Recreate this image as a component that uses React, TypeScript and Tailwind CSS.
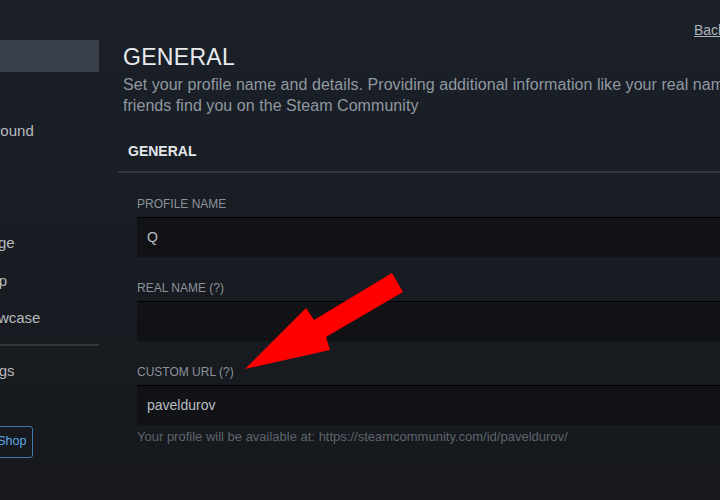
const NAV_TOP = ["General", "Avatar", "Profile Background", "Mini Profile", "Theme", "Featured Badge", "Favorite Group", "Featured Showcase"];

function Field({ label, value }: { label: string; value?: string }) {
  return (
    <div className="flex flex-col">
      <label className="h-[16px] text-[12px] leading-[16px] uppercase text-[#8b9299]">{label}</label>
      <div className="mt-[5px] flex h-[40px] items-center border-t border-black bg-[#101216] pl-[10px] text-[14px] text-[#b9bec2]">
        {value}
      </div>
    </div>
  );
}

export default function App() {
  return (
    <div className="relative h-[500px] w-[720px] overflow-hidden bg-gradient-to-b from-[#1b2029] to-[#16181c] font-['Liberation_Sans',Arial,sans-serif]">
      <div className="flex -ml-[101px]">
        <aside className="flex w-[200px] shrink-0 flex-col pt-[40px]">
          <nav className="flex flex-col gap-[5.5px]">
            {NAV_TOP.map((item, i) => (
              <div
                key={item}
                className={`flex h-[32px] items-center whitespace-nowrap pl-[8px] text-[15px] text-[#b7bbbf] ${i === 0 ? "bg-[#3b414b] text-white" : ""}`}
              >
                {item}
              </div>
            ))}
          </nav>
          <div className="mt-[9px] h-[2px] bg-[#33363c]" />
          <div className="mt-[10px] flex h-[32px] items-center whitespace-nowrap pl-[8px] text-[15px] text-[#b7bbbf]">
            Privacy Settings
          </div>
          <button className="ml-[53px] mt-[38px] h-[32px] self-start whitespace-nowrap rounded-[3px] border border-[#3f7cab] px-[6px] text-[12.5px] text-[#5aa9e8]">
            Points Shop
          </button>
        </aside>

        <main className="ml-[19px] flex w-[720px] shrink-0 flex-col">
          <div className="mt-[21px] h-[18px] pl-[576px] text-[14px] leading-[18px] whitespace-nowrap text-[#aeb3b8] underline">
            Back to Your Profile
          </div>
          <h1 className="mt-[4px] pl-[5px] text-[23px] leading-[28px] tracking-[0.3px] text-[#e8ebee]">GENERAL</h1>
          <p className="mt-[3px] pl-[5px] text-[16px] leading-[21px] tracking-[0.05px] whitespace-nowrap text-[#8f98a0]">
            Set your profile name and details. Providing additional information like your real name can help
            <br />
            friends find you on the Steam Community
          </p>
          <h2 className="mt-[26px] pl-[10px] text-[14px] leading-[18px] font-bold text-[#e3e6e9]">GENERAL</h2>
          <div className="mt-[11px] h-[2px] bg-[#33373d]" />

          <div className="flex flex-col gap-[23px] pl-[19px] pt-[23px]">
            <Field label="Profile Name" value="Q" />
            <Field label="Real Name (?)" />
            <div className="flex flex-col">
              <Field label="Custom URL (?)" value="paveldurov" />
              <p className="mt-[4px] text-[13px] leading-[16px] whitespace-nowrap text-[#5d656d]">
                Your profile will be available at: https://steamcommunity.com/id/paveldurov/
              </p>
            </div>
          </div>
        </main>
      </div>

      <svg className="pointer-events-none absolute left-0 top-0" width="720" height="500" viewBox="0 0 720 500">
        <polygon
          points="245,369 306,308 314,320 392,273 403,292 326,337 330,350"
          fill="#ff0000"
        />
      </svg>
    </div>
  );
}
